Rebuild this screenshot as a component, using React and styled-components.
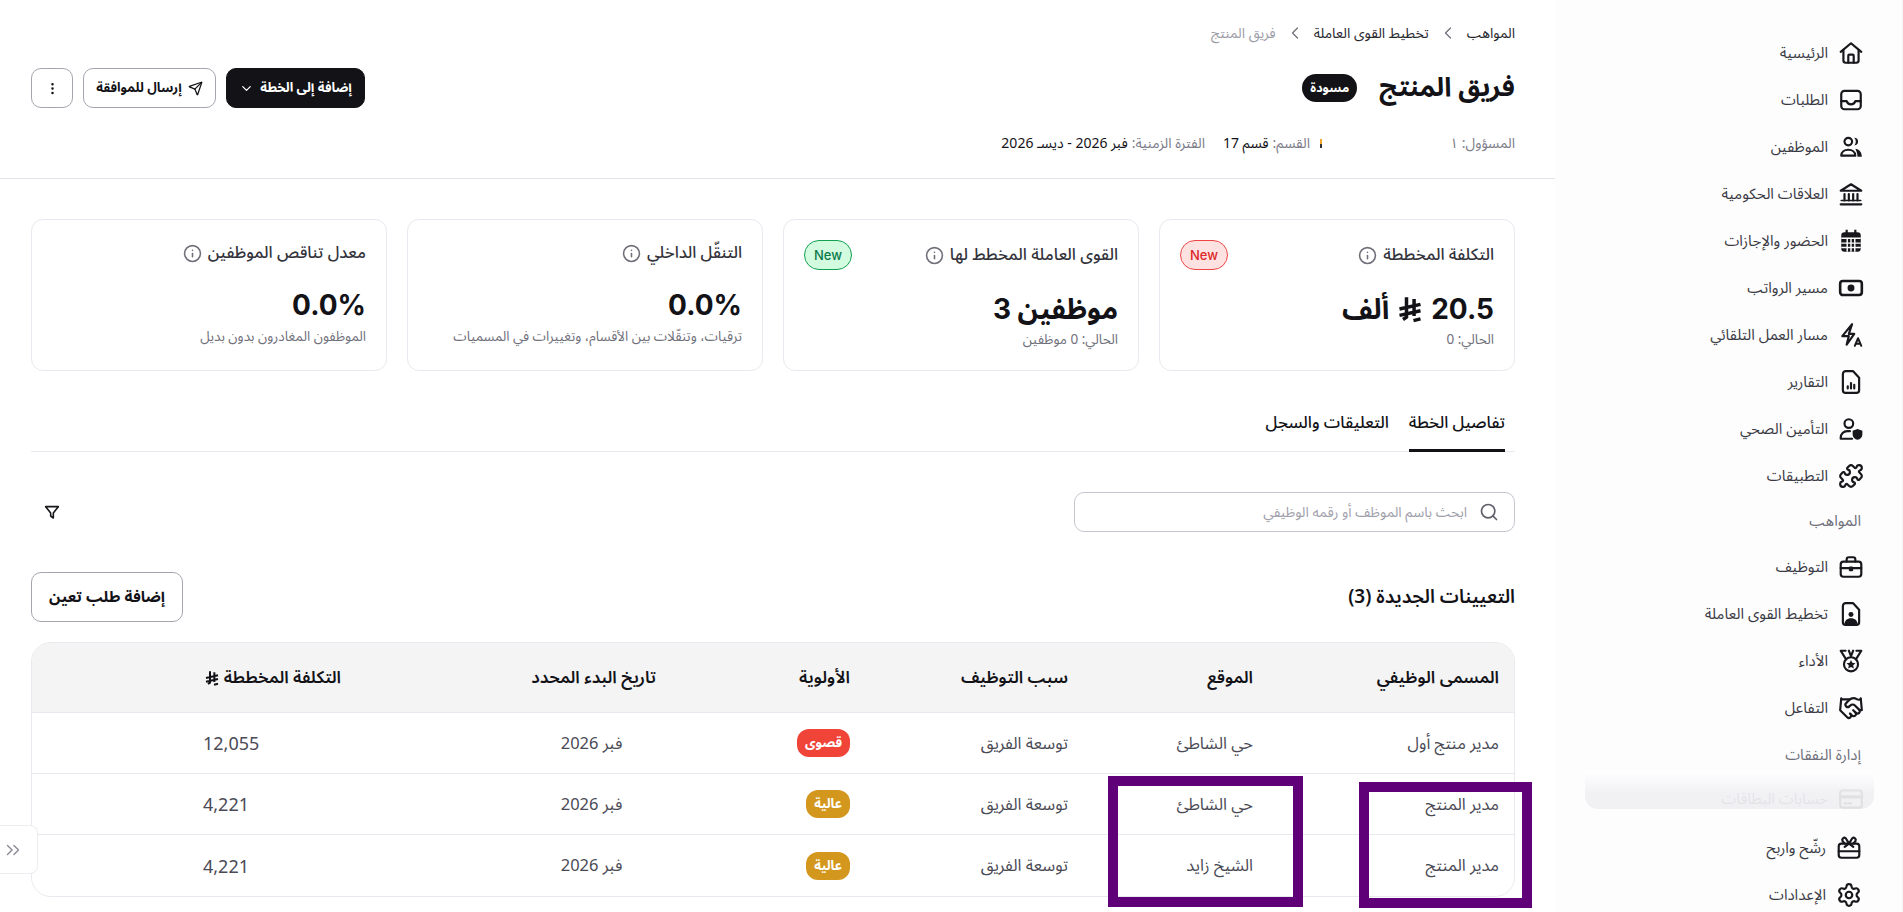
import React from 'react'
import styled, { createGlobalStyle } from 'styled-components'
import {
  ChevronDown, ChevronLeft, ChevronsRight, Handshake, Info, MoreVertical,
  Puzzle, Search, Send, Settings,
} from 'lucide-react'

const Global = createGlobalStyle`
html, body {
  margin : 0;
  height : 100%;
  overflow : hidden;
  background : #fff;
}
body {
  font-family : "Noto Sans Arabic", "Noto Sans", Inter, "DejaVu Sans", sans-serif;
  color : #121217;
}
* { box-sizing : border-box; }
`;

const Page = styled.div`
direction : rtl;
display : grid;
grid-template-columns : 348px 1555px;
height : 912px;
overflow : hidden;
`;

/* sidebar */
const Sidebar = styled.nav`
padding-top : 29px;
background : #fdfdfe;
border-right : 1px solid #f3f3f6;
`;

const NavRow = styled.div`
position : relative;
display : flex;
align-items : center;
gap : 10px;
height : 47px;
padding-right : ${p => p.$shift ? 40 : 38}px;
font-size : 15px;
color : #3a3a44;
margin-bottom : ${p => p.$after || 0}px;
svg { flex : none; width : 26px; height : 26px; color : #17171c; }
`;

const NavSection = styled.div`
display : flex;
align-items : center;
height : 44px;
padding-right : 41px;
padding-top : ${p => p.$low ? 3 : 0}px;
font-size : 15px;
color : #6f6f7b;
`;

const FadePill = styled.div`
position : absolute;
top : -4px;
left : 30px;
right : 28px;
height : 38px;
border-radius : 0 0 13px 13px;
background : linear-gradient(180deg, #fff 0%, rgba(241,241,244,.93) 55%, rgba(239,239,242,.93) 100%);
`;

const Outline = ({ children }) => (
  <svg viewBox="0 0 24 24" fill="none" stroke="currentColor" strokeWidth="2" strokeLinecap="round" strokeLinejoin="round">{children}</svg>
);

const icons = {
  home: <Outline><path d="M2.500 11 12 3l9.500 8" /><path d="M5 9v10a2 2 0 0 0 2 2h10a2 2 0 0 0 2-2V9" /><path d="M9.500 21v-6.500a1 1 0 0 1 1-1h3a1 1 0 0 1 1 1V21" /></Outline>,
  inbox: <Outline><rect x="3" y="3.500" width="18" height="17" rx="3" /><path d="M3 13h5c.6 2 2 3 4 3s3.400-1 4-3h5" /></Outline>,
  users: <Outline><circle cx="9.500" cy="7" r="3.500" /><path d="M3 20c0-3.500 3-5.500 6.500-5.500S16 16.500 16 20z" /><path fill="currentColor" stroke="none" d="M15 3.500a3.500 3.500 0 0 1 0 7 5 5 0 0 0 0-7zM16 13.500c3.500.5 6 3 6 7.500h-4c0-3-1-5.500-2-7.500z" /></Outline>,
  bank: <Outline><path d="M2.500 9 12 3l9.500 6z" /><path d="M6 12v6M10 12v6M14 12v6M18 12v6" /><path d="M3 18h18" strokeWidth="1.500" /><path d="M2.500 21.500h19" /></Outline>,
  calendar: <svg viewBox="0 0 24 24"><path fill="currentColor" d="M7 1.500h2V4h6V1.500h2V4h1a3 3 0 0 1 3 3v12a3 3 0 0 1-3 3H6a3 3 0 0 1-3-3V7a3 3 0 0 1 3-3h1z" /><path stroke="#fff" strokeWidth="1.300" d="M3 9.500h18M3 14h18M3 18h18M8.500 9v13M12 9v13M15.500 9v13" /></svg>,
  money: <Outline><rect x="2" y="5.500" width="20" height="13" rx="2.500" strokeWidth="2.400" /><circle cx="12" cy="12" r="3.200" fill="currentColor" stroke="none" /></Outline>,
  flash: <Outline><path d="M13 2 4 13h6l-2 8 7-10h-5z" /><path d="M15.500 22l3-7 3 7M16.500 20h4" strokeWidth="1.800" /></Outline>,
  report: <Outline><path d="M14 2H7a2.500 2.500 0 0 0-2.500 2.500v15A2.500 2.500 0 0 0 7 22h10a2.500 2.500 0 0 0 2.500-2.500V8z" /><path d="M9 18v-2M12 18v-5M15 18v-3.500" /></Outline>,
  shield: <Outline><circle cx="10" cy="7" r="4" /><path d="M2.500 21v-1a6 6 0 0 1 6-6h2.500M2.500 21H13" /><path fill="currentColor" stroke="none" d="M18 12l4.500 1.500V17c0 2.500-2 4.300-4.500 5-2.500-.7-4.500-2.500-4.500-5v-3.500z" /></Outline>,
  puzzle: <Puzzle />,
  briefcase: <Outline><rect x="2.500" y="7" width="19" height="14" rx="2.500" /><path d="M8 7V5a2 2 0 0 1 2-2h4a2 2 0 0 1 2 2v2M2.500 13h19" /><path d="M11 12.500h2v2.500h-2z" fill="currentColor" /></Outline>,
  person: <svg viewBox="0 0 24 24"><path fill="none" stroke="currentColor" strokeWidth="2" strokeLinejoin="round" d="M14 2H7a2.500 2.500 0 0 0-2.500 2.500v15A2.500 2.500 0 0 0 7 22h10a2.500 2.500 0 0 0 2.500-2.500V8z" /><circle cx="12" cy="12.500" r="2.300" fill="currentColor" /><path fill="currentColor" d="M6 21.500c0-3.500 2.500-5.500 6-5.500s6 2 6 5.500z" /></svg>,
  medal: <Outline><path d="M7 2.500H2.500l5 8M17 2.500h4.500l-5 8M10 2.500l2 5 2-5" /><circle cx="12" cy="15" r="6.500" /><path fill="currentColor" stroke="none" d="m12 11 1.200 2.700 3 .3-2.200 2 .6 3L12 17.500 9.400 19l.6-3-2.200-2 3-.3z" /></Outline>,
  shake: <Handshake />,
  card: <Outline><rect x="2" y="4" width="20" height="16" rx="2.500" /><path d="M2 10h20" strokeWidth="3" /><path d="M6 16h2M10 16h2" /></Outline>,
  gift: <Outline><rect x="2.500" y="8" width="19" height="13" rx="2.500" /><path d="M2.500 15h19M8 8l-2-2.500A2 2 0 0 1 9 3l3 5 3-5a2 2 0 0 1 3 2.500L16 8M8 11l4-3 4 3" /></Outline>,
  settings: <Settings />,
};

const nav = [
  ['row', 'home', 'الرئيسية'],
  ['row', 'inbox', 'الطلبات'],
  ['row', 'users', 'الموظفين'],
  ['row', 'bank', 'العلاقات الحكومية'],
  ['row', 'calendar', 'الحضور والإجازات'],
  ['row', 'money', 'مسير الرواتب'],
  ['row', 'flash', 'مسار العمل التلقائي'],
  ['row', 'report', 'التقارير'],
  ['row', 'shield', 'التأمين الصحي'],
  ['row', 'puzzle', 'التطبيقات'],
  ['section', '', 'المواهب'],
  ['row', 'briefcase', 'التوظيف'],
  ['row', 'person', 'تخطيط القوى العاملة'],
  ['row', 'medal', 'الأداء'],
  ['row', 'shake', 'التفاعل'],
  ['section', 'low', 'إدارة النفقات'],
  ['fade', 'card', 'حسابات البطاقات'],
  ['shift', 'gift', 'رشّح واربح'],
  ['shift', 'settings', 'الإعدادات'],
];

/* main column */
const Main = styled.main`
position : relative;
background : #fff;
`;

const Header = styled.header`
padding : 23px 40px 25px 31px;
border-bottom : 1px solid #e3e3ea;
`;

const Crumbs = styled.div`
display : flex;
align-items : center;
gap : 9px;
height : 20px;
font-size : 14px;
color : #26262d;
svg { width : 20px; height : 20px; stroke-width : 1.500; color : #70707b; }
`;

const CrumbLast = styled.span`
color : #9d9da8;
`;

const TitleRow = styled.div`
display : flex;
align-items : center;
justify-content : space-between;
height : 40px;
margin : 25px 0;
`;

const TitleGroup = styled.div`
display : flex;
align-items : center;
gap : 22px;
`;

const Title = styled.h1`
margin : 0;
font-size : 26.5px;
line-height : 40px;
font-weight : 700;
`;

const Badge = styled.span`
display : inline-flex;
align-items : center;
height : 28px;
padding : 0 8px;
border-radius : 14px;
background : #121217;
color : #fff;
font-size : 12.5px;
font-weight : 700;
`;

const Actions = styled.div`
display : flex;
gap : 10px;
`;

const Button = styled.button`
display : inline-flex;
align-items : center;
justify-content : center;
gap : 6px;
height : ${p => p.$tall ? 50 : 40}px;
width : ${p => p.$w}px;
padding : 0;
border : 1px solid ${p => p.$dark ? '#121217' : '#a5a5b0'};
border-radius : 10px;
background : ${p => p.$dark ? '#121217' : '#fff'};
color : ${p => p.$dark ? '#fff' : '#121217'};
font-family : inherit;
font-size : ${p => p.$tall ? 15.500 : 13}px;
font-weight : 700;
svg { width : 15px; height : 15px; }
`;

const Meta = styled.div`
display : flex;
align-items : center;
height : 20px;
font-size : 14px;
color : #7c7c88;
`;

const MetaItem = styled.span`
display : inline-flex;
align-items : center;
gap : 4px;
width : ${p => p.$w ? `${p.$w}px` : 'auto'};
b { font-weight : 400; color : #121217; }
`;

const Sliver = styled.i`
width : 2px;
height : 9px;
margin-left : 10px;
background : linear-gradient(180deg, #f4a62a, #f4a62a 60%, #333 60%);
`;

const Body = styled.div`
padding : 40px 40px 0 31px;
`;

const Cards = styled.div`
display : grid;
grid-template-columns : repeat(4, 1fr);
gap : 20px;
`;

const Card = styled.section`
height : 152px;
padding : ${p => p.$high ? 18 : 20}px 20px 0 20px;
border : 1px solid #e8e8f0;
border-radius : 12px;
`;

const CardHead = styled.div`
display : flex;
align-items : center;
justify-content : space-between;
height : 30px;
`;

const CardTitle = styled.div`
display : flex;
align-items : center;
gap : 6px;
font-size : 16.500px;
line-height : 24px;
font-weight : 500;
color : #33333b;
svg { width : 19px; height : 19px; color : #70707b; }
`;

const NewTag = styled.span`
display : inline-flex;
align-items : center;
justify-content : center;
width : 48px;
height : 30px;
border-radius : 15px;
border : 1px solid ${p => p.$tone === 'green' ? '#12a150' : '#ef4444'};
background : ${p => p.$tone === 'green' ? '#d3fbe0' : '#fee2e2'};
color : ${p => p.$tone === 'green' ? '#0b7a4b' : '#dc2626'};
font-family : Inter, sans-serif;
font-size : 13px;
font-weight : 500;
`;

const CardValue = styled.div`
display : flex;
align-items : center;
gap : 7px;
height : 36px;
margin-top : ${p => p.$high ? 19 : 21}px;
font-family : Inter, "Noto Sans Arabic", sans-serif;
font-size : 28px;
line-height : 36px;
font-weight : 700;
color : #121217;
`;

const CardNote = styled.div`
margin-top : ${p => p.$high ? 5 : 4}px;
font-size : 13.500px;
line-height : 18px;
color : #70707b;
`;

const Tabs = styled.div`
display : flex;
gap : 20px;
height : 57px;
margin-top : 24px;
padding-right : 10px;
border-bottom : 1px solid #e8e8ee;
`;

const Tab = styled.div`
height : 57px;
padding-top : 18px;
font-size : 16.500px;
line-height : 20px;
font-weight : 500;
border-bottom : 3px solid ${p => p.$active ? '#121217' : 'transparent'};
`;

const Toolbar = styled.div`
display : flex;
align-items : center;
justify-content : space-between;
margin-top : 40px;
`;

const SearchBox = styled.div`
display : flex;
align-items : center;
gap : 12px;
width : 441px;
height : 40px;
padding : 0 15px;
border : 1px solid #c5c5cf;
border-radius : 10px;
font-size : 14px;
color : #a0a0ab;
svg { width : 20px; height : 20px; color : #60606b; }
`;

const FilterWrap = styled.div`
display : flex;
justify-content : center;
width : 42px;
svg { width : 16px; height : 16px; color : #17171c; }
`;

const SectionRow = styled.div`
display : flex;
align-items : center;
justify-content : space-between;
margin-top : 40px;
`;

const SectionTitle = styled.h2`
margin : 0;
font-size : 19px;
font-weight : 600;
`;

const Table = styled.div`
margin-top : 20px;
border : 1px solid #e8e8ee;
border-radius : 20px;
overflow : hidden;
`;

const TableRow = styled.div`
display : grid;
grid-template-columns : 246px 185px 218px 194px 315px 1fr;
align-items : center;
height : ${p => p.$head ? 70 : 61}px;
background : ${p => p.$head ? '#f4f4f5' : '#fff'};
border-bottom : ${p => p.$last ? 0 : 1}px solid #e8e8ee;
font-size : ${p => p.$head ? 17 : 16.500}px;
font-weight : ${p => p.$head ? 600 : 400};
color : ${p => p.$head ? '#121217' : '#4a4a55'};
`;

const Cell = styled.div`
display : flex;
align-items : center;
gap : 4px;
padding-right : 15px;
white-space : nowrap;
`;

const DateCell = styled(Cell)`
justify-content : center;
padding-left : 171px;
`;

const AmountCell = styled(Cell)`
justify-content : flex-end;
padding-left : 171px;
font-family : "Noto Sans", sans-serif;
font-size : 18px;
`;

const Priority = styled.span`
display : inline-flex;
align-items : center;
height : 28px;
padding : 0 8px;
border-radius : 12px;
background : ${p => p.$tone === 'red' ? '#f04438' : '#d4971e'};
color : #fff;
font-size : 13px;
font-weight : 700;
`;

const Handle = styled.div`
position : absolute;
left : 0;
top : 825px;
display : flex;
align-items : center;
justify-content : flex-end;
width : 38px;
height : 49px;
padding-left : 2px;
background : #fff;
border : 1px solid #ececf1;
border-left : 0;
border-radius : 0 8px 8px 0;
svg { width : 22px; height : 22px; stroke-width : 1.500; color : #8a8a94; }
`;

const Marker = styled.div`
position : absolute;
left : ${p => p.$x}px;
top : ${p => p.$y}px;
width : ${p => p.$w}px;
height : ${p => p.$h}px;
border : 10px solid #5f0078;
`;

const Riyal = ({ size = 16 }) => (
  <svg width={size} height={size} viewBox="0 0 24 24" fill="none" stroke="currentColor" strokeWidth="3">
    <path d="M9 2v17l-3 2M15.500 3.500V18M3 12l18-4M3 17.500l18-4M15 22l6-1.500" />
  </svg>
);

const cards = [
  { title: 'التكلفة المخططة', tag: 'red', value: <><span>20.5</span><Riyal size={28} /><span>ألف</span></>, note: 'الحالي: 0' },
  { title: 'القوى العاملة المخطط لها', tag: 'green', value: 'موظفين 3', note: 'الحالي: 0 موظفين' },
  { title: 'التنقّل الداخلي', high: true, value: '0.0%', note: 'ترقيات، وتنقّلات بين الأقسام، وتغييرات في المسميات' },
  { title: 'معدل تناقص الموظفين', high: true, value: '0.0%', note: 'الموظفون المغادرون بدون بديل' },
];

const rows = [
  ['مدير منتج أول', 'حي الشاطئ', 'توسعة الفريق', 'قصوى', 'red', 'فبر 2026', '12,055'],
  ['مدير المنتج', 'حي الشاطئ', 'توسعة الفريق', 'عالية', 'amber', 'فبر 2026', '4,221'],
  ['مدير المنتج', 'الشيخ زايد', 'توسعة الفريق', 'عالية', 'amber', 'فبر 2026', '4,221'],
];

function App() {
  return (
    <Page>
      <Global />
      <Sidebar>
        {nav.map(([kind, icon, label]) => {
          if (kind === 'section') return <NavSection key={label} $low={icon === 'low'}>{label}</NavSection>;
          return (
            <NavRow key={label} $shift={kind === 'shift'} $after={kind === 'fade' ? 2 : 0}>
              {icons[icon]}
              <span>{label}</span>
              {kind === 'fade' && <FadePill />}
            </NavRow>
          );
        })}
      </Sidebar>
      <Main>
        <Header>
          <Crumbs>
            <span>المواهب</span>
            <ChevronLeft />
            <span>تخطيط القوى العاملة</span>
            <ChevronLeft />
            <CrumbLast>فريق المنتج</CrumbLast>
          </Crumbs>
          <TitleRow>
            <TitleGroup>
              <Title>فريق المنتج</Title>
              <Badge>مسودة</Badge>
            </TitleGroup>
            <Actions>
              <Button $dark $w={139}>إضافة إلى الخطة <ChevronDown /></Button>
              <Button $w={133}><Send />إرسال للموافقة</Button>
              <Button $w={42}><MoreVertical /></Button>
            </Actions>
          </TitleRow>
          <Meta>
            <MetaItem $w={193}>المسؤول: ١</MetaItem>
            <Sliver />
            <MetaItem $w={105}>القسم: <b>قسم 17</b></MetaItem>
            <MetaItem>الفترة الزمنية: <b>فبر 2026 - ديسـ 2026</b></MetaItem>
          </Meta>
        </Header>
        <Body>
          <Cards>
            {cards.map(c => (
              <Card key={c.title} $high={c.high}>
                <CardHead>
                  <CardTitle>{c.title}<Info /></CardTitle>
                  {c.tag && <NewTag $tone={c.tag}>New</NewTag>}
                </CardHead>
                <CardValue $high={c.high}>{c.value}</CardValue>
                <CardNote $high={c.high}>{c.note}</CardNote>
              </Card>
            ))}
          </Cards>
          <Tabs>
            <Tab $active>تفاصيل الخطة</Tab>
            <Tab>التعليقات والسجل</Tab>
          </Tabs>
          <Toolbar>
            <SearchBox><Search /><span>ابحث باسم الموظف أو رقمه الوظيفي</span></SearchBox>
            <FilterWrap>
              <svg viewBox="0 0 24 24" fill="none" stroke="currentColor" strokeWidth="2.400" strokeLinejoin="round"><path d="M2.500 4h19l-7.500 9.500V21l-4-3v-4.500z" /></svg>
            </FilterWrap>
          </Toolbar>
          <SectionRow>
            <SectionTitle>التعيينات الجديدة (3)</SectionTitle>
            <Button $tall $w={152}>إضافة طلب تعين</Button>
          </SectionRow>
          <Table>
            <TableRow $head>
              <Cell>المسمى الوظيفي</Cell>
              <Cell>الموقع</Cell>
              <Cell>سبب التوظيف</Cell>
              <Cell>الأولوية</Cell>
              <Cell>تاريخ البدء المحدد</Cell>
              <Cell>التكلفة المخططة <Riyal size={16} /></Cell>
            </TableRow>
            {rows.map((r, i) => (
              <TableRow key={i} $last={i === rows.length - 1}>
                <Cell>{r[0]}</Cell>
                <Cell>{r[1]}</Cell>
                <Cell>{r[2]}</Cell>
                <Cell><Priority $tone={r[4]}>{r[3]}</Priority></Cell>
                <DateCell>{r[5]}</DateCell>
                <AmountCell>{r[6]}</AmountCell>
              </TableRow>
            ))}
          </Table>
        </Body>
        <Handle><ChevronsRight /></Handle>
        <Marker $x={1359} $y={782} $w={173} $h={126} />
        <Marker $x={1108} $y={776} $w={195} $h={131} />
      </Main>
    </Page>
  )
}

export default App
